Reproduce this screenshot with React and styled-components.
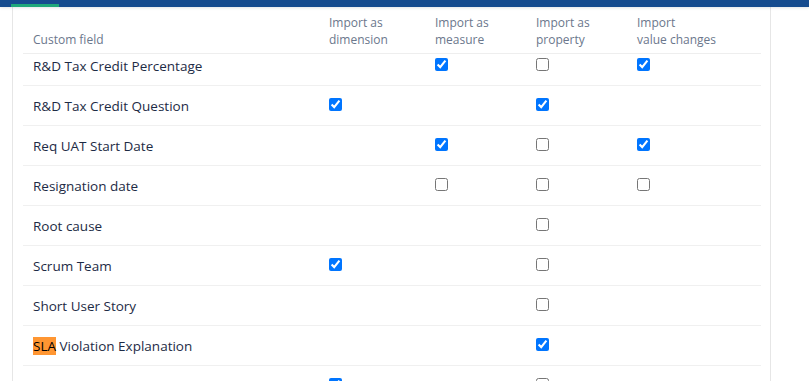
import React from "react";
import styled, { createGlobalStyle } from "styled-components";

const Global = createGlobalStyle`
  html, body { margin: 0; padding: 0; background: #fff; }
  body { font-family: "Open Sans", "Noto Sans", sans-serif; overflow: hidden; }
`;

const TopBar = styled.div`
  height: 7px;
  background: #154b8f;
  position: relative;
  box-shadow: 0 1px 3px rgba(9, 30, 66, 0.12);
  z-index: 2;
`;

const TabIndicator = styled.div`
  position: absolute;
  left: 11px;
  bottom: 0;
  width: 48px;
  height: 3px;
  background: #1ea77b;
`;

const Page = styled.div`
  display: flex;
  height: 374px;
`;

const Panel = styled.div`
  margin-left: 12px;
  width: 759px;
  border-left: 1px solid #e6e6e6;
  border-right: 1px solid #e6e6e6;
  box-sizing: border-box;
  padding: 0 9px 0 10px;
  overflow: hidden;
`;

const Table = styled.div`
  display: flex;
  flex-direction: column;
`;

const cols = "296px 106px 101px 101px 134px";

const HeaderRow = styled.div`
  display: grid;
  grid-template-columns: ${cols};
  border-bottom: 1px solid #eeeeee;
  background: #fff;
  position: relative;
  z-index: 1;
`;

const HeadCell = styled.div`
  padding: 7px 10px 5px;
  font-size: 12px;
  line-height: 17px;
  color: #6b778c;
  display: flex;
  align-items: flex-end;
  min-height: 34px;
`;

const Body = styled.div`
  margin-top: -8px;
`;

const Row = styled.div`
  display: grid;
  grid-template-columns: ${cols};
  height: 40px;
  border-bottom: 1px solid #f0f0f0;
  box-sizing: border-box;
  align-items: center;
`;

const NameCell = styled.div`
  padding: 0 10px;
  font-size: 13.5px;
  color: #1d2b45;
  white-space: nowrap;
`;

const Cell = styled.div`
  padding: 0 10px 3px;
  display: flex;
  align-items: center;
  height: 100%;
  box-sizing: border-box;
`;

const Check = styled.input.attrs({ type: "checkbox", readOnly: true })`
  margin: 0;
  width: 13px;
  height: 13px;
`;

const Mark = styled.span`
  background: #ff9632;
  color: #000;
`;

const rows = [
  { name: "R&D Tax Credit Percentage", v: [null, true, false, true] },
  { name: "R&D Tax Credit Question", v: [true, null, true, null] },
  { name: "Req UAT Start Date", v: [null, true, false, true] },
  { name: "Resignation date", v: [null, false, false, false] },
  { name: "Root cause", v: [null, null, false, null] },
  { name: "Scrum Team", v: [true, null, false, null] },
  { name: "Short User Story", v: [null, null, false, null] },
  { name: <><Mark>SLA</Mark> Violation Explanation</>, v: [null, null, true, null] },
  { name: "", v: [true, null, false, null] },
];

export default function App() {
  return (
    <>
      <Global />
      <TopBar>
        <TabIndicator />
      </TopBar>
      <Page>
        <Panel>
          <Table>
            <HeaderRow>
              <HeadCell>Custom field</HeadCell>
              <HeadCell>Import as<br />dimension</HeadCell>
              <HeadCell>Import as<br />measure</HeadCell>
              <HeadCell>Import as<br />property</HeadCell>
              <HeadCell>Import<br />value changes</HeadCell>
            </HeaderRow>
            <Body>
              {rows.map((r, i) => (
                <Row key={i}>
                  <NameCell>{r.name}</NameCell>
                  {r.v.map((c, j) => (
                    <Cell key={j}>{c === null ? null : <Check checked={c} />}</Cell>
                  ))}
                </Row>
              ))}
            </Body>
          </Table>
        </Panel>
      </Page>
    </>
  );
}
